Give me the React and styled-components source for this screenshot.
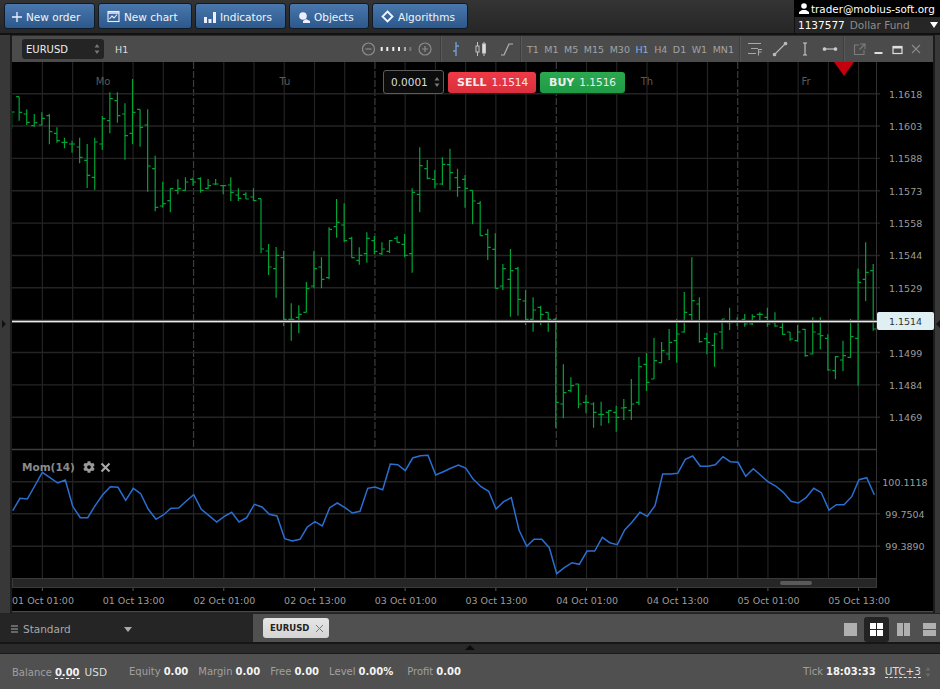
import React from "react"
import styled, { createGlobalStyle } from "styled-components"
import { FaCog } from "react-icons/fa"

const GlobalStyle = createGlobalStyle`
  html, body { margin: 0; padding: 0; background: #2a2a2a; }
  * { box-sizing: border-box; }
`

const font = `"DejaVu Sans", Verdana, sans-serif`

const Page = styled.div`
  width: 940px;
  height: 689px;
  display: flex;
  flex-direction: column;
  overflow: hidden;
  font-family: ${font};
  font-size: 10.5px;
  color: #fff;
`

const TopBar = styled.div`
  height: 35px;
  flex: none;
  display: flex;
  gap: 3px;
  padding: 3px 0 0 4px;
  background: linear-gradient(#343434, #262626);
  border-bottom: 2px solid #111;
`

const NavButton = styled.div`
  width: ${(p) => p.$w}px;
  height: 26px;
  display: flex;
  align-items: center;
  gap: ${(p) => p.$gap || 4}px;
  padding: 1px 0 0 ${(p) => p.$pad || 8}px;
  font-size: 10.5px;
  color: #f0f4f8;
  border: 1px solid #0e1a28;
  border-radius: 3px;
  background: linear-gradient(#4a78ac, #2c588c);
`

const UserBox = styled.div`
  margin: -3px 0 0 auto;
  width: 146px;
  height: 33px;
  display: flex;
  flex-direction: column;
  background: #000;
`

const UserRow = styled.div`
  height: 17px;
  display: flex;
  align-items: center;
  gap: 2px;
  padding-left: 5px;
  font-size: 10.4px;
  white-space: nowrap;
`

const AccountRow = styled.div`
  height: 16px;
  display: flex;
  align-items: center;
  gap: 5px;
  padding-left: 3px;
  font-size: 10.5px;
  background: #262626;
  border-left: 1px solid #111;
  position: relative;
`

const FundName = styled.span`
  color: #8c8c8c;
`

const AccountCaret = styled.span`
  position: absolute;
  right: 2px;
  top: 5px;
  border: 4px solid transparent;
  border-top: 6px solid #fff;
  border-bottom: 0;
`

const Workspace = styled.div`
  height: 578px;
  flex: none;
  display: flex;
`

const SideStrip = styled.div`
  width: ${(p) => p.$w}px;
  flex: none;
  display: flex;
  align-items: center;
  background: #383838;
  border-${(p) => p.$side}: 2px solid #1c1c1c;
`

const SideArrow = styled.span`
  margin: 0 0 0 ${(p) => p.$left}px;
  border-top: 4px solid transparent;
  border-bottom: 4px solid transparent;
  border-${(p) => (p.$right ? "right" : "left")}: 4px solid #111;
`

const ChartWindow = styled.div`
  width: 921px;
  flex: none;
  display: flex;
  flex-direction: column;
  padding-top: 1px;
`

const WindowHeader = styled.div`
  height: 26px;
  flex: none;
  display: flex;
  background: #4b4b4b;
  color: #9e9e9e;
`

const HeaderSection = styled.div`
  width: ${(p) => p.$w}px;
  flex: none;
  display: flex;
  align-items: center;
  padding-left: ${(p) => p.$pad || 0}px;
  gap: ${(p) => p.$gap || 0}px;
  border-left: ${(p) => (p.$first ? "0" : "1px solid #3f3f3f")};
  box-shadow: ${(p) => (p.$first ? "none" : "inset 1px 0 0 #585858")};
`

const SymbolSelect = styled.div`
  width: 82px;
  height: 20px;
  display: flex;
  align-items: center;
  justify-content: space-between;
  padding: 0 4px;
  font-size: 10px;
  color: #eee;
  background: #242424;
  border-radius: 3px;
`

const PeriodLabel = styled.span`
  margin-left: 11px;
  font-size: 9.5px;
  color: #ddd;
`

const ZoomGroup = styled.div`
  margin-left: auto;
  margin-right: 8px;
  display: flex;
  align-items: center;
`

const Frame = styled.span`
  font-size: 9.5px;
  color: ${(p) => (p.$active ? "#7fb2e5" : "#a2a2a2")};
`

const Plot = styled.div`
  position: relative;
  width: 921px;
  height: 550px;
  background: #000;
  border-bottom: 1px solid #4a4a4a;
`

const Canvas = styled.svg`
  display: block;
  font-family: ${font};
`

const AxisLabel = styled.text`
  font-size: 9.5px;
  fill: #9c9c9c;
`

const DayLabel = styled.text`
  font-size: 10px;
  fill: #5a5a5a;
`

const TradePanel = styled.div`
  position: absolute;
  left: 371px;
  top: 8px;
  display: flex;
  align-items: center;
  gap: 4px;
`

const StepBox = styled.div`
  width: 61px;
  height: 24px;
  display: flex;
  align-items: center;
  justify-content: space-between;
  padding: 0 3px 0 7px;
  font-size: 10.5px;
  color: #ddd;
  background: #0c0c0c;
  border: 1px solid #5c5c5c;
  border-radius: 3px;
`

const TradeButton = styled.div`
  width: ${(p) => p.$w}px;
  height: 21px;
  display: flex;
  align-items: center;
  gap: 5px;
  padding-left: 9px;
  font-size: 10.5px;
  color: #eee;
  border-radius: 3px;
  background: ${(p) => p.$bg};

  b {
    font-size: 11px;
  }
`

const PriceTag = styled.div`
  position: absolute;
  left: 865px;
  top: 250px;
  width: 57px;
  height: 18px;
  display: flex;
  align-items: center;
  justify-content: center;
  font-size: 9.5px;
  color: #333;
  background: #dff0f5;
  border-radius: 2px;
`

const Legend = styled.div`
  position: absolute;
  left: 10px;
  top: 399px;
  display: flex;
  align-items: center;
  gap: 5px;
  font-size: 10.5px;
  font-weight: bold;
  color: #8a8a8a;
`

const GearIcon = styled(FaCog)`
  margin-left: 3px;
  font-size: 12px;
  color: #999;
`

const TabsBar = styled.div`
  height: 31px;
  flex: none;
  display: flex;
  background: #505050;
  border-top: 1px solid #222;
  border-bottom: 2px solid #161616;
`

const LayoutPicker = styled.div`
  width: 253px;
  flex: none;
  display: flex;
  align-items: center;
  gap: 5px;
  padding: 2px 0 0 11px;
  font-size: 10.5px;
  color: #a8a8a8;
  background: #252525;
`

const PickerCaret = styled.span`
  margin-left: 48px;
  border: 4px solid transparent;
  border-top: 5px solid #aaa;
  border-bottom: 0;
`

const ChartTab = styled.div`
  width: 66px;
  height: 20px;
  margin: 4px 0 0 10px;
  display: flex;
  align-items: center;
  gap: 6px;
  padding-left: 7px;
  font-size: 8.5px;
  font-weight: bold;
  color: #222;
  background: linear-gradient(#e6e6e6, #d4d4d4);
  border-radius: 3px;
`

const ViewButtons = styled.div`
  margin: 0 -2px 0 auto;
  display: flex;
  align-items: center;
  padding-top: 2px;
`

const ViewButton = styled.div`
  width: 25px;
  height: 25px;
  margin-left: 1.3px;
  display: flex;
  align-items: center;
  justify-content: center;
  background: ${(p) => (p.$active ? "#232323" : "transparent")};
  border-radius: 3px;
`

const Handle = styled.div`
  height: 10px;
  flex: none;
  display: flex;
  justify-content: center;
  background: #2a2a2a;
  border-bottom: 1px solid #1b1b1b;
`

const HandleArrow = styled.span`
  margin-top: 1px;
  height: 0;
  border-left: 5px solid transparent;
  border-right: 5px solid transparent;
  border-bottom: 5px solid #0c0c0c;
`

const StatusBar = styled.div`
  flex: 1;
  display: flex;
  align-items: center;
  padding: 0 0 0 12px;
  font-size: 10px;
  color: #a0a0a0;
  background: #505050;
`

const Stat = styled.span`
  margin-right: ${(p) => p.$gap || 10}px;
  white-space: nowrap;
`

const Value = styled.b`
  margin-left: 3px;
  color: #f4f4f4;
  border-bottom: ${(p) => (p.$dashed ? "1px dashed #eee" : "0")};
`

const Plain = styled.span`
  margin-left: 5px;
  font-size: 10.5px;
  color: #ddd;
  border-bottom: ${(p) => (p.$dashed ? "1px dashed #ddd" : "0")};
`

const Clock = styled.div`
  margin-left: auto;
  display: flex;
  align-items: center;
  padding-right: 9px;
`

const ClockSpinner = styled.span`
  display: flex;
  margin-left: 4px;
`

// high, low, open, close, in page pixels
const bars = [
  [112, 129, 129, 112],
  [96.7, 120.7, 96.7, 112.3],
  [109.3, 125, 114, 122.3],
  [114, 126.7, 125.7, 122.7],
  [112.3, 125.7, 125, 118.3],
  [114, 144.3, 115.7, 131.7],
  [127.3, 142.7, 133.3, 140.7],
  [137.7, 148.3, 142.3, 142.3],
  [140.7, 152.7, 144, 144],
  [137.7, 163.3, 147, 157.3],
  [144, 188, 160.3, 175.3],
  [137.7, 190, 177.3, 142],
  [116, 150, 144, 118.7],
  [92.3, 133.3, 120.7, 98.7],
  [92.3, 122.7, 100.7, 115.7],
  [103.3, 159.7, 114, 135.7],
  [79, 144.3, 133.3, 112.3],
  [109.3, 146.7, 109.3, 127.3],
  [109.3, 191.7, 125, 166],
  [155.7, 211.3, 168.7, 207.3],
  [181.7, 207.7, 206, 203.7],
  [188.3, 212.3, 200.7, 188.7],
  [179.3, 194.3, 190.3, 188.7],
  [177.3, 190.7, 190.3, 182],
  [177.3, 185.7, 179.3, 182],
  [177.3, 192.7, 178.7, 190.3],
  [179, 189.3, 188.3, 185.7],
  [179, 185, 184, 184],
  [185, 194.3, 185.7, 185.7],
  [177.3, 201, 185, 192.3],
  [188.3, 201, 195, 198.3],
  [192.3, 199.3, 194.3, 199],
  [188.3, 201, 197, 200.7],
  [198.7, 253, 198.7, 249],
  [244, 275, 251, 267],
  [247, 297.7, 268.7, 255.3],
  [251, 326, 257.7, 319.3],
  [303.3, 340.7, 319.3, 319.3],
  [305.3, 333.3, 317.3, 314.3],
  [282, 312.3, 312.3, 288.7],
  [251, 288.3, 286, 268.7],
  [257.3, 288.3, 267, 279.3],
  [227.3, 279.3, 277.7, 229.3],
  [199, 237.7, 226.7, 222.3],
  [203.3, 242.3, 225, 240.7],
  [236.7, 257.7, 238.3, 257.7],
  [247.3, 264.7, 260.3, 255.3],
  [232.3, 262.7, 253.7, 238.3],
  [236, 254.3, 240.7, 251.3],
  [242.3, 255, 253.7, 249],
  [240, 253, 251.3, 240.7],
  [236, 242.7, 238.3, 242.3],
  [234, 257.3, 244.3, 255.3],
  [188.3, 272.7, 253.7, 192.3],
  [147.3, 212.3, 194.3, 165.7],
  [160, 179.3, 168.7, 178.3],
  [170, 188.3, 179.3, 184],
  [157.3, 185, 184, 164.3],
  [148.7, 190, 164.7, 172.7],
  [168.7, 196.7, 177.7, 187.3],
  [175, 207.7, 179.3, 188.3],
  [190.3, 224.3, 190.3, 201],
  [201, 235.7, 203.3, 235.7],
  [229, 260, 234.3, 247.3],
  [233.3, 288.3, 249.3, 288.3],
  [264, 290, 286, 268.7],
  [249, 316.7, 279.3, 270.7],
  [266.7, 315.7, 268.7, 299.3],
  [290, 325, 301, 319.3],
  [297.3, 331.7, 319.3, 310],
  [305.7, 325, 307.3, 314.3],
  [312.3, 331.7, 312.3, 319.3],
  [317.7, 427.7, 319.3, 402.3],
  [364.3, 418.3, 404, 392.7],
  [377.3, 392.3, 390.7, 385.7],
  [383.7, 408.3, 384, 404],
  [395, 413.3, 402.3, 402.3],
  [402.3, 427.7, 404, 412.3],
  [401.7, 425.7, 414.3, 414.3],
  [410, 423.3, 412.3, 410.7],
  [405.7, 431.7, 412.3, 417.3],
  [399, 420, 408, 407.7],
  [379, 420, 410.3, 404],
  [357, 405, 402.3, 366.7],
  [353, 391, 364.3, 382.3],
  [338, 379, 379, 360.7],
  [342, 362.7, 362.7, 350.7],
  [329, 360, 354, 342.3],
  [319, 362.7, 340.7, 334],
  [292, 332.7, 332, 312.3],
  [257.3, 320, 314.7, 300.7],
  [297.3, 342.7, 304, 341.7],
  [332.7, 354.3, 338.7, 342.3],
  [332.7, 366.7, 345.3, 334],
  [319, 349.3, 332, 319],
  [307.7, 330, 322.7, 322.7],
  [317.3, 326, 321, 321],
  [314, 326.7, 319.3, 324],
  [314.3, 325, 324, 316.7],
  [312.3, 320.7, 314.3, 314.3],
  [307.7, 326.7, 317.3, 324],
  [312.3, 326.7, 322.7, 326],
  [322.7, 335, 327.3, 334.3],
  [332, 340.7, 332, 339],
  [325, 341.7, 340.7, 332],
  [329, 356.7, 329.3, 355.7],
  [317.3, 354.3, 354, 332],
  [317.3, 349.3, 334, 335.7],
  [334.3, 370.7, 338.3, 370],
  [356, 379.3, 370.7, 356.7],
  [340.7, 371, 360, 355.7],
  [319, 357.7, 357.3, 336.7],
  [268.7, 385.7, 338.3, 282.3],
  [242.3, 301, 279.3, 272.3],
  [264, 330.7, 270.7, 329],
]

const barPath = bars
  .map(([h, l, o, c], i) => {
    const x = 11.6 + i * 7.558
    return `M${x} ${h}V${l}M${x - 3} ${o}H${x}M${x} ${c}H${x + 3}`
  })
  .join("")

// momentum line, as read in pieces along the panel
const mom = [
  [12.7, 510.7], [20, 498.3], [27.3, 499], [34.7, 486], [42.3, 472.3], [50, 477.7], [57.7, 483], [65.3, 480],
  [72.7, 506.3], [80.3, 517.7], [87.7, 517.7], [95.3, 505.3], [102.7, 494.7], [110.3, 486.7], [118, 487.3],
  [125.7, 500.3], [133.3, 488.3], [140.7, 493.7], [148.3, 509.3], [156, 519.3], [163.3, 515], [171, 508.3],
  [178.7, 508], [186, 501.3], [193.7, 494.7], [201.3, 509.3], [209, 515.7], [216.7, 522], [224, 516.7],
  [231.7, 512.3], [239, 522], [246.7, 517.7], [254.3, 504.3], [262, 507], [269.3, 514.3], [277, 516],
  [284.7, 538.7], [292.3, 541], [300, 539.3], [307.3, 527], [315, 521.7], [322.3, 526], [329.7, 507.7],
  [337.3, 503], [345, 507.7], [352.3, 513], [360, 511.3], [367.7, 488.3], [375, 487], [382.7, 489.7],
  [390.3, 464], [397.7, 464.7], [405.3, 470.7], [412.7, 458], [420.3, 455.7], [428, 455.3], [435.7, 475],
  [443.3, 471.7], [450.7, 468.3], [458.3, 465], [465.7, 468], [473.3, 479.3], [481, 486.7], [488.7, 491.3],
  [496, 509], [503.7, 501.7], [511.3, 497.7], [519, 530], [526.7, 546.3], [534, 539.3], [541.7, 539.3],
  [549.3, 547.7], [556.7, 573.7], [564.3, 567.7], [572, 562.7], [579.3, 564.3], [587, 551], [594.7, 551],
  [602.3, 537.3], [609.7, 542.7], [617.3, 544.7], [624.7, 530], [632.3, 521.7], [640, 512.3], [647.3, 516.3],
  [655, 505.7], [662.7, 474], [670.3, 474], [677.7, 473.3], [685.3, 459.3], [692.7, 456], [700.3, 466.3],
  [707.7, 466.3], [715.3, 464.7], [723, 456.7], [730.3, 461.7], [738, 462.3], [745.7, 476.3], [753.3, 468.7],
  [760.7, 475.3], [768.3, 482], [775.7, 486], [783.3, 492.3], [791, 501.3], [798.3, 503], [806, 497.7],
  [813.7, 488.3], [821.3, 492.7], [829, 510], [836.3, 504.7], [844, 504.7], [851.7, 496.7], [859, 479.7],
  [866.7, 477.7], [874.3, 494.7],
]

const prices = ["1.1618", "1.1603", "1.1588", "1.1573", "1.1558", "1.1544", "1.1529", null, "1.1499", "1.1484", "1.1469"]
const momLabels = [[481.7, "100.1118"], [513.7, "99.7504"], [546.3, "99.3890"]]
const dates = ["01 Oct 01:00", "01 Oct 13:00", "02 Oct 01:00", "02 Oct 13:00", "03 Oct 01:00", "03 Oct 13:00", "04 Oct 01:00", "04 Oct 13:00", "05 Oct 01:00", "05 Oct 13:00"]
const days = [["Mo", 103], ["Tu", 285], ["Th", 647], ["Fr", 806]]
const frames = ["T1", "M1", "M5", "M15", "M30", "H1", "H4", "D1", "W1", "MN1"]

const gridX = Array.from({ length: 28 }, (_, i) => 42.4 + i * 30.23)
const gridY = Array.from({ length: 11 }, (_, i) => 93.7 + i * 32.35)

const Spinner = ({ color = "#777" }) => (
  <svg width="6" height="12" viewBox="0 0 6 12">
    <path d="M3 1L5.5 4.5H.5zM3 11L.5 7.5h5z" fill={color} />
  </svg>
)

const Chart = () => (
  <Canvas width="921" height="549" viewBox="12 62 921 549">
    {gridX.map((x, i) => (
      <g key={x}>
        <line x1={x} x2={x} y1="62" y2="449" stroke={i % 6 === 5 ? "#3c3c3c" : "#232323"} strokeWidth="1.2" strokeDasharray={i % 6 === 5 ? "7 2" : undefined} />
        <line x1={x} x2={x} y1="450" y2="578" stroke="#232323" strokeWidth="1.2" />
      </g>
    ))}
    {gridY.map((y, i) => (
      <g key={y}>
        <line x1="12" x2="880" y1={y} y2={y} stroke="#242424" strokeWidth="1.4" />
        {prices[i] && <AxisLabel x="889" y={y + 4}>{prices[i]}</AxisLabel>}
      </g>
    ))}
    {momLabels.map(([y, t]) => (
      <g key={t}>
        <line x1="12" x2="880" y1={y} y2={y} stroke="#242424" strokeWidth="1.4" />
        <AxisLabel x="905" y={y + 4} textAnchor="middle">{t}</AxisLabel>
      </g>
    ))}
    <line x1="876.5" x2="876.5" y1="62" y2="588" stroke="#333" />
    <line x1="12" x2="877" y1="449.5" y2="449.5" stroke="#3c3c3c" strokeWidth="1.4" />
    {days.map(([d, x]) => (
      <DayLabel key={d} x={x} y="85" textAnchor="middle">{d}</DayLabel>
    ))}
    <path d={barPath} stroke="#00a436" strokeWidth="1.2" fill="none" />
    <line x1="12" x2="877" y1="321.5" y2="321.5" stroke="#5e5e5e" strokeWidth="3" />
    <line x1="12" x2="877" y1="321.5" y2="321.5" stroke="#eaeaea" strokeWidth="1.2" />
    <polyline points={mom.map((p) => p.join(",")).join(" ")} fill="none" stroke="#2a6fd0" strokeWidth="1.5" />
    <path d="M834 62h20l-10 14z" fill="#c4000f" />
    <rect x="12.5" y="578.5" width="864" height="9" fill="#262626" stroke="#3a3a3a" />
    <rect x="780" y="581" width="32" height="4" rx="2" fill="#5a5a5a" />
    {dates.map((d, i) => (
      <g key={d}>
        <line x1={42.4 + i * 90.69} x2={42.4 + i * 90.69} y1="588" y2="591" stroke="#555" />
        <AxisLabel x={43 + i * 90.69} y="604" textAnchor="middle">{d}</AxisLabel>
      </g>
    ))}
  </Canvas>
)

const Header = () => (
  <WindowHeader>
    <HeaderSection $w={428} $pad={10} $first>
      <SymbolSelect>
        EURUSD
        <Spinner />
      </SymbolSelect>
      <PeriodLabel>H1</PeriodLabel>
      <ZoomGroup>
        <svg width="70" height="16" viewBox="0 0 70 16" fill="none" stroke="#8c8c8c" strokeWidth="1.2">
          <circle cx="6.5" cy="8" r="6" />
          <path d="M3.5 8h6" />
          <circle cx="63" cy="8" r="6" />
          <path d="M60 8h6M63 5v6" />
          <path d="M19.7 6v4M25.3 6v4M31.3 6v4M37 6v4" stroke="#eee" strokeWidth="2" />
          <path d="M43 6v4" stroke="#aaa" strokeWidth="2" />
          <path d="M48.3 6v4" stroke="#777" strokeWidth="2" />
        </svg>
      </ZoomGroup>
    </HeaderSection>
    <HeaderSection $w={80} $pad={9} $gap={12}>
      <svg width="12" height="16" viewBox="0 0 12 16" fill="none" stroke="#6f9fd6" strokeWidth="1.4">
        <path d="M6 1v14M3 10h3M6 5h3" />
      </svg>
      <svg width="14" height="16" viewBox="0 0 14 16" fill="none" stroke="#c2c2c2">
        <path d="M3.5 1v14M10 1v14" />
        <rect x="2" y="5" width="3" height="6" fill="#4b4b4b" />
        <rect x="8.5" y="3" width="3" height="9" fill="#ddd" />
      </svg>
      <svg width="14" height="16" viewBox="0 0 14 16" fill="none" stroke="#b5b5b5" strokeWidth="1.2">
        <path d="M1 14h3L9 3h4" />
      </svg>
    </HeaderSection>
    <HeaderSection $w={219} $pad={6} $gap={5.5}>
      {frames.map((f) => (
        <Frame key={f} $active={f === "H1"}>{f}</Frame>
      ))}
    </HeaderSection>
    <HeaderSection $w={104} $pad={7} $gap={9}>
      <svg width="16" height="16" viewBox="0 0 16 16" fill="none" stroke="#a8a8a8" strokeWidth="1.1">
        <path d="M1 2.5h13M4 7.5h7M1 12.5h8M11.5 14.5v-6H15M11.5 11h3" />
      </svg>
      <svg width="16" height="16" viewBox="0 0 16 16" fill="#bbb" stroke="#bbb" strokeWidth="1.1">
        <path d="M3 13L13 3" />
        <circle cx="2.5" cy="13.5" r="1.3" />
        <circle cx="13.5" cy="2.5" r="1.3" />
      </svg>
      <svg width="16" height="16" viewBox="0 0 16 16" fill="#ccc" stroke="#ccc" strokeWidth="1.1">
        <path d="M8 2v12M6 2h4M6 14h4" />
      </svg>
      <svg width="16" height="16" viewBox="0 0 16 16" fill="#ccc" stroke="#ccc" strokeWidth="1.1">
        <path d="M2 8h12" />
        <circle cx="2.5" cy="8" r="1.3" />
        <circle cx="13.5" cy="8" r="1.3" />
      </svg>
    </HeaderSection>
    <HeaderSection $w={90} $pad={9} $gap={6}>
      <svg width="13" height="13" viewBox="0 0 13 13" fill="none" stroke="#7c7c7c" strokeWidth="1.1">
        <path d="M6 2H1.5v9.5H11V7M7 1h5v5M12 1L6.5 6.5" />
      </svg>
      <svg width="13" height="13" viewBox="0 0 13 13" fill="none" stroke="#e0e0e0" strokeWidth="2">
        <path d="M2.5 10h8" />
      </svg>
      <svg width="13" height="13" viewBox="0 0 13 13" fill="none" stroke="#e0e0e0" strokeWidth="1.2">
        <rect x="2" y="3.5" width="9" height="7" />
        <path d="M2 4.5h9" strokeWidth="2" />
      </svg>
      <svg width="13" height="13" viewBox="0 0 13 13" fill="none" stroke="#8a8a8a" strokeWidth="1.1">
        <path d="M2 2l8 8M10 2l-8 8" />
      </svg>
    </HeaderSection>
  </WindowHeader>
)

const App = () => (
  <Page>
    <GlobalStyle />
    <TopBar>
      <NavButton $w={91} $pad={6} $gap={3}>
        <svg width="12" height="12" viewBox="0 0 12 12" stroke="#eef" strokeWidth="1.3">
          <path d="M6 1v10M1 6h10" />
        </svg>
        <span>New order</span>
      </NavButton>
      <NavButton $w={94}>
        <svg width="13" height="13" viewBox="0 0 13 13" fill="none" stroke="#eef" strokeWidth="1.1">
          <rect x="1" y="1.5" width="11" height="10" />
          <path d="M1 3h11" strokeWidth="1.5" />
          <path d="M2.5 9l2.5-3 2 2 3-3.5" />
        </svg>
        <span>New chart</span>
      </NavButton>
      <NavButton $w={91}>
        <svg width="12" height="12" viewBox="0 0 12 12" fill="#eef">
          <path d="M0 6h3v6H0zM4.5 8h3v4h-3zM9 1h3v11H9z" />
        </svg>
        <span>Indicators</span>
      </NavButton>
      <NavButton $w={80}>
        <svg width="12" height="12" viewBox="0 0 12 12" fill="#eef">
          <circle cx="5" cy="5" r="3.8" />
          <path d="M5 10l3-2 4 2v2H5z" />
        </svg>
        <span>Objects</span>
      </NavButton>
      <NavButton $w={96}>
        <svg width="13" height="13" viewBox="0 0 13 13" fill="none" stroke="#f4f6fa" strokeWidth="1.8">
          <path d="M6.5 1.5l5 5-5 5-5-5z" />
        </svg>
        <span>Algorithms</span>
      </NavButton>
      <UserBox>
        <UserRow>
          <svg width="10" height="11" viewBox="0 0 10 11" fill="#fff">
            <circle cx="5" cy="3" r="2.8" />
            <path d="M0 11V9l3-2h4l3 2v2z" />
          </svg>
          trader@mobius-soft.org
        </UserRow>
        <AccountRow>
          1137577
          <FundName>Dollar Fund</FundName>
          <AccountCaret />
        </AccountRow>
      </UserBox>
    </TopBar>
    <Workspace>
      <SideStrip $w={12} $side="right">
        <SideArrow $left={2} />
      </SideStrip>
      <ChartWindow>
        <Header />
        <Plot>
          <Chart />
          <TradePanel>
            <StepBox>
              0.0001
              <Spinner />
            </StepBox>
            <TradeButton $w={88} $bg="linear-gradient(#ee3a46, #d92f3c)">
              <b>SELL</b> 1.1514
            </TradeButton>
            <TradeButton $w={85} $bg="linear-gradient(#2ba94f, #1f9a45)">
              <b>BUY</b> 1.1516
            </TradeButton>
          </TradePanel>
          <PriceTag>1.1514</PriceTag>
          <Legend>
            Mom(14)
            <GearIcon />
            <svg width="11" height="11" viewBox="0 0 11 11" stroke="#aaa" strokeWidth="2">
              <path d="M1.5 1.5l8 8M9.5 1.5l-8 8" />
            </svg>
          </Legend>
        </Plot>
      </ChartWindow>
      <SideStrip $w={7} $side="left">
        <SideArrow $left={1} $right />
      </SideStrip>
    </Workspace>
    <TabsBar>
      <LayoutPicker>
        <svg width="7" height="8" viewBox="0 0 7 8" stroke="#aaa">
          <path d="M0 1h7M0 4h7M0 7h7" />
        </svg>
        Standard
        <PickerCaret />
      </LayoutPicker>
      <ChartTab>
        EURUSD
        <svg width="9" height="9" viewBox="0 0 9 9" stroke="#777">
          <path d="M1 1l7 7M8 1L1 8" />
        </svg>
      </ChartTab>
      <ViewButtons>
        <ViewButton>
          <svg width="13" height="13" viewBox="0 0 13 13" fill="#b0b0b0"><path d="M0 0h13v13H0z" /></svg>
        </ViewButton>
        <ViewButton $active>
          <svg width="13" height="13" viewBox="0 0 13 13" fill="#fff"><path d="M0 0h6v6H0zM7 0h6v6H7zM0 7h6v6H0zM7 7h6v6H7z" /></svg>
        </ViewButton>
        <ViewButton>
          <svg width="13" height="13" viewBox="0 0 13 13" fill="#b0b0b0"><path d="M0 0h6v13H0zM7 0h6v13H7z" /></svg>
        </ViewButton>
        <ViewButton>
          <svg width="13" height="13" viewBox="0 0 13 13" fill="#b0b0b0"><path d="M0 0h13v6H0zM0 7h13v6H0z" /></svg>
        </ViewButton>
      </ViewButtons>
    </TabsBar>
    <Handle>
      <HandleArrow />
    </Handle>
    <StatusBar>
      <Stat $gap={22}>Balance<Value $dashed>0.00</Value><Plain>USD</Plain></Stat>
      <Stat>Equity<Value>0.00</Value></Stat>
      <Stat>Margin<Value>0.00</Value></Stat>
      <Stat>Free<Value>0.00</Value></Stat>
      <Stat $gap={14}>Level<Value>0.00%</Value></Stat>
      <Stat>Profit<Value>0.00</Value></Stat>
      <Clock>
        <Stat $gap={4}>Tick<Value>18:03:33</Value></Stat>
        <Plain $dashed>UTC+3</Plain>
        <ClockSpinner><Spinner color="#6a6a6a" /></ClockSpinner>
      </Clock>
    </StatusBar>
  </Page>
)

export default App
